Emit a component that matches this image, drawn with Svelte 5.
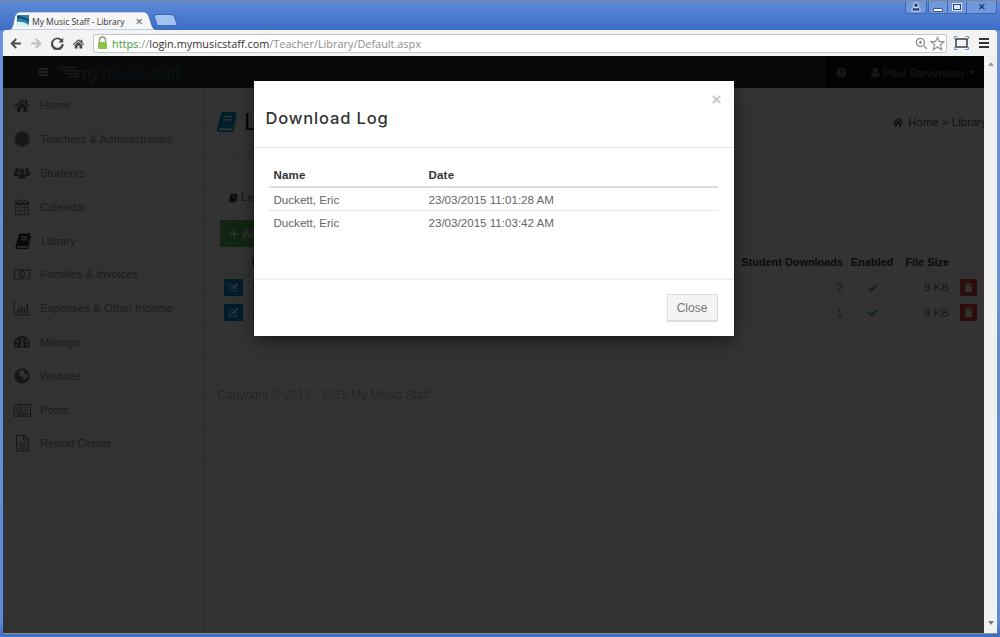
<script>
  const star = (() => {
    let d = '';
    for (let i = 0; i < 32; i++) {
      const r = i % 2 ? 11.5 : 8.5;
      const a = (i / 32) * Math.PI * 2;
      d += `${i ? 'L' : 'M'}${(12 + r * Math.cos(a)).toFixed(2)} ${(12 + r * Math.sin(a)).toFixed(2)}`;
    }
    return d + 'z';
  })();

  const icons = {
    home: 'M12 4 1.5 13.2 3 14.8 12 7l9 7.8 1.5-1.6L19 10.2V5h-3v2.6zM5 14.8V21h5.2v-5h3.6v5H19v-6.2L12 8.8z',
    star,
    users:
      'M5.5 5a2.6 2.6 0 1 0 .01 0zM18.5 5a2.6 2.6 0 1 0 .01 0zM12 6a3.3 3.3 0 1 0 .01 0zM1 11.5c0-1 1-1.6 2-1.6h4c.5 0 1 .2 1.300.5-1 .8-1.800 2-1.800 3.600v2H3c-1.200 0-2-.7-2-1.800zM23 11.500c0-1-1-1.600-2-1.600h-4c-.5 0-1 .2-1.300.5 1 .8 1.800 2 1.800 3.600v2H21c1.200 0 2-.7 2-1.800zM9.500 12.500h5c1.500 0 2.500 1 2.500 2.500v3c0 1.500-1 2-2.500 2h-5C8 20 7 19.500 7 18v-3c0-1.500 1-2.500 2.500-2.500z',
    calendar:
      'M3 4.500h18V23H3zM4.300 9v12.700h15.400V9zM6.500 2h2.500v5H6.500zM11 2h2v5h-2zM15 2h2.500v5H15zM4.300 12.500h15.400v.8H4.300zM4.300 16.500h15.400v.8H4.300zM8 9h.8v12.700H8zM11.600 9h.8v12.700h-.8zM15.200 9h.8v12.700h-.8z',
    book: 'M7 2h15l-3.800 17H5.500c-1 0-1.300.5-1.300 1s.4 1 1.300 1H18l4-16.500 1 .8L19 23H4.500C2.500 23 1.500 21.500 2 19.500zM9.500 6l-.3 1.500h8.500l.3-1.500zM8.800 9.500l-.3 1.500H17l.3-1.500z',
    money:
      'M1 6h22v13H1zM2.500 7.500v10h19v-10zM12 8a4.500 4.500 0 1 0 .01 0zM12 9.500a3 3 0 1 1-.01 0zM11.300 10.500h1.400v4.500h-1.400z',
    chart: 'M1 3h1.300v17.700H23V22H1zM6 13h2.200v6H6zM10 10h2.200v9H10zM14 12h2.200v7H14zM18 6h2.200v13H18z',
    gauge:
      'M12 4C5.500 4 1 9 1 14.500c0 2 .5 3.500 1.500 5h19c1-1.500 1.500-3 1.500-5C23 9 18.500 4 12 4zM6 9a1.600 1.600 0 1 1-.01 0zM12 6.500a1.600 1.600 0 1 1-.01 0zM18 9a1.600 1.600 0 1 1-.01 0zM4.500 13.500a1.600 1.600 0 1 1-.01 0zM19.500 13.500a1.600 1.600 0 1 1-.01 0zM11 11h2l.5 5a1.800 1.800 0 1 1-3 0z',
    globe:
      'M12 2a10 10 0 1 0 .01 0zM9 5c2-1 5-1 7 0l-2 3 2 2 3-1 1 3-3 4-3 1-1-4-4-1-1-4z',
    news: 'M1 4h23v17H1zM2.300 5.300v14.400h20.400V5.300zM5 7h7v6.500H5zM6.300 8.300v3.900h4.400V8.300zM14 7.500h6.500v1.300H14zM14 11h6.500v1.300H14zM5 15h15.500v1.300H5zM5 17.500h15.500v1H5z',
    file: 'M4 1h11l6 6v16H4zM5.500 2.500v19h14V9h-6V2.500zM15 3.200V7.500h4.300zM8 12h9v1.200H8zM8 15h9v1.200H8zM8 18h9v1.200H8z',
    edit: 'M3 5h10l-2 2H5v12h12v-6l2-2v10H3zM19 2l3 3-10 10H9v-3z',
    trash: 'M9 2h6v2h5v2H4V4h5zM5 7.500h14V22H5z',
    check: 'M2 13l3-3 5 5L20 5l3 3L10 21z',
    plus: 'M9.500 2h5v7.500H22v5h-7.500V22h-5v-7.500H2v-5h7.500z',
    help: 'M12 1.500a10.500 10.500 0 1 0 .01 0zM11 16h2.500v3H11zM8 8.500c.5-2 2-3 4-3 2.500 0 4.300 1.400 4.300 3.500 0 2.700-3 2.800-3 5h-2.500c0-3.200 2.800-3.300 2.800-5 0-.8-.6-1.300-1.500-1.300-1 0-1.500.5-1.800 1.500z',
    user: 'M12 2a5.500 5.500 0 1 0 .01 0zM6 12.500c1.500 1.200 3.500 1.800 6 1.800s4.500-.6 6-1.800c2 .5 3.500 3 3.500 6.500 0 2-1 3-3 3h-13c-2 0-3-1-3-3 0-3.500 1.500-6 3.500-6.500z'
  };

  const nav = [
    ['home', 'Home'],
    ['star', 'Teachers & Administrators'],
    ['users', 'Students'],
    ['calendar', 'Calendar'],
    ['book', 'Library'],
    ['money', 'Families & Invoices'],
    ['chart', 'Expenses & Other Income'],
    ['gauge', 'Mileage'],
    ['globe', 'Website'],
    ['news', 'Posts'],
    ['file', 'Report Center']
  ];

  const files = [
    { name: 'Lesson notes', downloads: 2 },
    { name: 'Lesson plan', downloads: 1 }
  ];

  const log = [
    { name: 'Duckett, Eric', date: '23/03/2015 11:01:28 AM' },
    { name: 'Duckett, Eric', date: '23/03/2015 11:03:42 AM' }
  ];
</script>

{#snippet icon(name, size)}
  <svg class="icon" width={size} height={size} viewBox="0 0 24 24" aria-hidden="true">
    <path d={icons[name]} fill="currentColor" fill-rule="evenodd" />
  </svg>
{/snippet}

<div class="window">
  <div class="tabstrip">
    <svg class="tabshape" width="150" height="18" viewBox="0 0 150 18" aria-hidden="true">
      <path d="M0 18C5 18 6 15 7 8 8 2 10 0 14 0H136c4 0 5 2 7 8 2 7 3 10 7 10z" fill="#f6f6f6" stroke="#3f6bb5" stroke-width=".6" />
    </svg>
    <div class="tab">
      <svg class="favicon" width="12" height="12" viewBox="0 0 12 12" aria-hidden="true">
        <rect width="12" height="12" fill="#2d7fa8" />
        <path d="M0 7c4-1 8 0 12 3v2H0z" fill="#d8eef5" />
        <path d="M0 3c4 0 8 1 12 4V5C8 2 4 1 0 1z" fill="#0c4a68" />
      </svg>
      <span class="tabtitle">My Music Staff - Library</span>
      <span class="tabclose">×</span>
    </div>
    <div class="newtab"></div>
    <div class="winbtns">
      <div class="wingroup single">
        <svg width="10" height="10" viewBox="0 0 24 24" aria-hidden="true"><path d={icons.user} fill="#23407a" stroke="#fff" stroke-width="2" /></svg>
      </div>
      <div class="wingroup">
        <div class="winbtn"><span class="min"></span></div>
        <div class="winbtn"><span class="max"></span></div>
        <div class="winbtn wide">✕</div>
      </div>
    </div>
  </div>

  <div class="toolbar">
    <svg class="tool" width="13" height="13" viewBox="0 0 24 24" aria-hidden="true"><path d="M22 10H9.500l5-5L12 2.500 2.500 12l9.500 9.500 2.500-2.500-5-5H22z" fill="#4a4a4a" /></svg>
    <svg class="tool" width="13" height="13" viewBox="0 0 24 24" aria-hidden="true"><path d="M2 10h12.500l-5-5L12 2.500l9.500 9.500-9.500 9.500L9.500 19l5-5H2z" fill="#bdbdbd" /></svg>
    <svg class="tool" width="13" height="13" viewBox="0 0 24 24" aria-hidden="true"><path d="M19.500 13a7.800 7.800 0 1 1-2.300-6.500L14 10h8.500V1.500l-2.800 2.800A11.800 11.800 0 1 0 23.500 13z" fill="#4a4a4a" /></svg>
    <svg class="tool" width="13" height="13" viewBox="0 0 24 24" aria-hidden="true"><path d={icons.home} fill="#4a4a4a" /></svg>
    <div class="omnibox">
      <svg width="11" height="14" viewBox="0 0 11 14" aria-hidden="true">
        <path d="M2.500 6V4a3 3 0 0 1 6 0v2" fill="none" stroke="#8c9a7c" stroke-width="1.400" />
        <rect x="1" y="6" width="9" height="7" rx="1" fill="#8ec44e" />
      </svg>
      <span class="url"><span class="green">https</span><span class="grey">://</span><span class="domain">login.mymusicstaff.com</span><span class="grey">/Teacher/Library/Default.aspx</span></span>
      <svg class="omni-right" width="13" height="13" viewBox="0 0 24 24" aria-hidden="true">
        <circle cx="10" cy="10" r="7.500" fill="none" stroke="#8f8f8f" stroke-width="2.400" />
        <path d="M15.500 15.500 22 22M7 10h6M10 7v6" stroke="#8f8f8f" stroke-width="2.400" />
      </svg>
      <svg width="15" height="15" viewBox="0 0 24 24" aria-hidden="true">
        <path d="M12 2l3 7h7.500l-6 5 2.200 8L12 17.500 5.300 22l2.200-8-6-5H9z" fill="#fff" stroke="#8f8f8f" stroke-width="1.800" />
      </svg>
    </div>
    <svg class="fullscreen" width="15" height="14" viewBox="0 0 15 14" aria-hidden="true">
      <rect x="2" y="3" width="11" height="8" fill="none" stroke="#333" stroke-width="1.400" />
      <path d="M.5 3V.5h3M11.500.5h3V3M14.500 11v2.500h-3M3.500 13.500h-3V11" fill="none" stroke="#5b93d6" stroke-width="1" />
    </svg>
    <div class="burger"><span></span><span></span><span></span></div>
  </div>

  <div class="viewport">
    <div class="page">
      <header class="topnav">
        <span class="hamburger"><span></span><span></span><span></span></span>
        <svg class="swoosh" width="18" height="13" viewBox="0 0 18 13" aria-hidden="true">
          <path d="M0 1h18v1.300H0zM3 4h15v1.300H3zM6 7h12v1.300H6zM9 10h9v1.300H9z" fill="#8a8a8a" />
        </svg>
        <span class="logo"><span class="my">my</span> <span class="ms">music staff</span></span>
        <div class="usernav">
          <span class="helpicon">{@render icon('help', 11)}</span>
          <span class="username">{@render icon('user', 11)} Paul Stevenson <span class="caret"></span></span>
        </div>
      </header>

      <div class="body">
        <aside class="sidebar">
          {#each nav as [ic, label]}
            <div class="navitem" class:active={label === 'Library'}>
              <span class="navicon">{@render icon(ic, 18)}</span>
              <span>{label}</span>
            </div>
          {/each}
        </aside>

        <main class="main">
          <div class="pagehead">
            <span class="headicon">{@render icon('book', 23)}</span>
            <h1>Library</h1>
            <div class="crumbs">{@render icon('home', 12)} <span>Home &gt; Library</span></div>
          </div>

          <div class="content">
            <div class="tabs">{@render icon('book', 10)} <span>Lesson Files</span></div>
            <div class="card">
              <div class="addbtn">{@render icon('plus', 10)} Add</div>
              <div class="thead row">
                <span></span>
                <span>Name</span>
                <span class="num">Student Downloads</span>
                <span class="center">Enabled</span>
                <span class="num">File Size</span>
                <span></span>
              </div>
              {#each files as f}
                <div class="row">
                  <span class="editbtn">{@render icon('edit', 11)}</span>
                  <span>{f.name}</span>
                  <span class="num">{f.downloads}</span>
                  <span class="center check">{@render icon('check', 11)}</span>
                  <span class="num">9 KB</span>
                  <span class="delbtn">{@render icon('trash', 11)}</span>
                </div>
              {/each}
            </div>
            <p class="copyright">Copyright © 2013 - 2015 My Music Staff</p>
          </div>
        </main>
      </div>

      <div class="overlay">
        <div class="modal">
          <div class="modalhead">
            <span class="close">×</span>
            <h2>Download Log</h2>
          </div>
          <div class="modalbody">
            <table>
              <thead>
                <tr><th class="colname">Name</th><th>Date</th></tr>
              </thead>
              <tbody>
                {#each log as l}
                  <tr><td>{l.name}</td><td>{l.date}</td></tr>
                {/each}
              </tbody>
            </table>
          </div>
          <div class="modalfoot"><button>Close</button></div>
        </div>
      </div>
    </div>

    <div class="scrollbar"><span class="arrow"></span><span class="arrow down"></span></div>
  </div>
</div>

<style>
  :global(body) {
    margin: 0;
    overflow: hidden;
  }
  .window {
    width: 1000px;
    height: 637px;
    display: flex;
    flex-direction: column;
    box-sizing: border-box;
    padding: 0 3px 3px;
    background: linear-gradient(#5f8bd8 0, #3c6cc4 29px, #6a93da 30px, #5f8ad6 620px, #3f6fc4 634px);
    border-top: 1px solid #7d8797;
    font-family: 'Liberation Sans', Arial, sans-serif;
    font-size: 12px;
    overflow: hidden;
  }
  .tabstrip {
    height: 29px;
    display: flex;
    align-items: flex-end;
    position: relative;
    flex: none;
  }
  .tabshape {
    position: absolute;
    left: 4px;
    bottom: 0;
  }
  .tab {
    position: relative;
    width: 126px;
    height: 18px;
    margin-left: 14px;
    display: flex;
    align-items: center;
    gap: 3px;
    font-family: 'Open Sans', sans-serif;
    font-size: 8.500px;
    color: #333;
  }
  .tabtitle {
    flex: 1;
    white-space: nowrap;
  }
  .tabclose {
    font-size: 13px;
    line-height: 1;
    color: #555;
  }
  .newtab {
    width: 19px;
    height: 10px;
    margin: 0 0 4px 12px;
    background: #a3c2ef;
    border: 1px solid #3f6bb5;
    border-radius: 3px 3px 0 0;
    transform: skewX(18deg);
  }
  .winbtns {
    margin-left: auto;
    align-self: flex-start;
    display: flex;
    gap: 0;
  }
  .wingroup {
    height: 12px;
    display: flex;
    border: 1px solid #3f68b4;
    border-top: 0;
    border-radius: 0 0 3px 3px;
    background: #6f98dd;
  }
  .wingroup.single {
    width: 20px;
    justify-content: center;
    align-items: center;
    margin-right: 1px;
  }
  .winbtn {
    width: 18px;
    display: flex;
    align-items: center;
    justify-content: center;
    border-right: 1px solid #3f68b4;
    color: #1c3a78;
    font-size: 9px;
    font-weight: 700;
  }
  .winbtn.wide {
    width: 29px;
    border-right: 0;
  }
  .min {
    width: 8px;
    height: 2px;
    margin-top: 5px;
    background: #fff;
    border: 1px solid #3a5a96;
    border-radius: 1px;
  }
  .max {
    width: 6px;
    height: 4px;
    background: #dfe9f9;
    border: 1px solid #23407a;
    outline: 1px solid #dfe9f9;
  }
  .toolbar {
    height: 26px;
    flex: none;
    display: flex;
    align-items: center;
    gap: 8px;
    padding: 0 0 0 6px;
    background: #f3f3f3;
    border-radius: 3px 3px 0 0;
  }
  .tool {
    flex: none;
  }
  .omnibox {
    width: 854px;
    height: 19px;
    flex: none;
    box-sizing: border-box;
    display: flex;
    align-items: center;
    gap: 2px;
    padding: 0 1px 0 3px;
    background: #fff;
    border: 1px solid #c4c4c4;
    border-radius: 2px;
  }
  .url {
    flex: 1;
    margin-left: 2px;
    font-family: 'Open Sans', sans-serif;
    font-size: 10.900px;
    white-space: nowrap;
  }
  .green {
    color: #3d9a3d;
  }
  .grey {
    color: #8d8d8d;
  }
  .domain {
    color: #333;
  }
  .fullscreen {
    flex: none;
    margin-left: -1px;
  }
  .burger {
    display: flex;
    flex-direction: column;
    gap: 2px;
    width: 10px;
    flex: none;
    margin-left: 2px;
  }
  .burger span {
    height: 2px;
    background: #333;
  }
  .viewport {
    flex: 1;
    display: flex;
    min-height: 0;
  }
  .page {
    flex: 1;
    position: relative;
    display: flex;
    flex-direction: column;
    background: #fff;
    overflow: hidden;
    min-width: 0;
    border-bottom: 1px solid #8e8e8e;
  }
  .scrollbar {
    width: 13px;
    flex: none;
    background: #f1f1f1;
    display: flex;
    flex-direction: column;
    align-items: center;
    justify-content: space-between;
    padding: 6px 0 8px;
    box-sizing: border-box;
    border-bottom: 1px solid #8e8e8e;
  }
  .arrow {
    width: 0;
    height: 0;
    border: 3px solid transparent;
    border-top: 0;
    border-bottom: 4px solid #a0a0a0;
  }
  .arrow.down {
    border-bottom: 0;
    border-top: 4px solid #777;
  }
  .topnav {
    height: 32px;
    flex: none;
    display: flex;
    align-items: center;
    background: #2f2f2f;
    color: #777;
  }
  .hamburger {
    display: flex;
    flex-direction: column;
    gap: 1.500px;
    width: 10px;
    margin: 0 11px 0 35px;
  }
  .hamburger span {
    height: 1.500px;
    background: #999;
  }
  .logo {
    margin-left: -1px;
    font-family: 'Open Sans', sans-serif;
    font-size: 17px;
    font-weight: 300;
    letter-spacing: -0.4px;
    white-space: nowrap;
  }
  .my {
    color: #8a8a8a;
  }
  .ms {
    color: #1e6f9a;
  }
  .usernav {
    margin-left: auto;
    width: 159px;
    height: 100%;
    display: flex;
    align-items: center;
    background: #111;
    color: #777;
    box-sizing: border-box;
    padding: 1px 0 0 11px;
  }
  .helpicon {
    display: flex;
    margin-right: 23px;
  }
  .username {
    display: flex;
    align-items: center;
    gap: 2px;
    font-size: 11.500px;
    white-space: nowrap;
  }
  .caret {
    width: 0;
    height: 0;
    margin-left: 3px;
    border: 3px solid transparent;
    border-bottom: 0;
    border-top: 3px solid #777;
  }
  .body {
    flex: 1;
    display: flex;
    min-height: 0;
  }
  .sidebar {
    width: 201px;
    flex: none;
    box-sizing: content-box;
    padding-top: 1px;
    background: #fafafa;
    border-right: 1px solid #ddd;
    color: #8a8a8a;
    font-size: 11.400px;
  }
  .navitem {
    height: 33.800px;
    box-sizing: border-box;
    display: flex;
    align-items: center;
    gap: 9px;
    padding-left: 10px;
    border-bottom: 1px solid #f1f1f1;
  }
  .navitem.active {
    background: #fff;
    padding-left: 11px;
  }
  .navicon {
    width: 18px;
    display: flex;
    justify-content: center;
    color: #707070;
  }
  .navitem.active .navicon {
    color: #333;
  }
  .icon {
    display: block;
    flex: none;
  }
  .main {
    flex: 1;
    min-width: 0;
  }
  .pagehead {
    height: 68px;
    box-sizing: border-box;
    display: flex;
    align-items: center;
    padding-left: 10px;
    border-bottom: 1px solid #fff;
    background: #fff;
    box-shadow: 0 1px 0 #e8e8e8;
  }
  .headicon {
    color: #0093d6;
    margin-right: 6px;
  }
  h1 {
    margin: 0;
    font-size: 24px;
    font-weight: 400;
    color: #111;
  }
  .crumbs {
    margin-left: auto;
    display: flex;
    align-items: center;
    gap: 4px;
    color: #555;
    font-size: 11.500px;
    white-space: nowrap;
    overflow: hidden;
    width: 92px;
    flex: none;
  }
  .content {
    padding: 32px 0 0 12px;
  }
  .tabs {
    height: 24px;
    display: flex;
    align-items: flex-start;
    gap: 3px;
    margin-left: 11px;
    padding-top: 3px;
    box-sizing: border-box;
    color: #777;
    font-size: 11.500px;
  }
  .tabs .icon {
    margin-top: 2px;
    color: #222;
  }
  .card {
    height: 143px;
    box-sizing: border-box;
    border: 1px solid #eee;
    border-right: 0;
    border-radius: 3px 0 0 3px;
    padding: 7px 7px 0 2px;
  }
  .addbtn {
    width: 60px;
    height: 27px;
    display: flex;
    align-items: center;
    gap: 3px;
    padding-left: 9px;
    box-sizing: border-box;
    background: #5cb85c;
    color: #eee;
    font-size: 12px;
    font-weight: 700;
  }
  .row {
    display: grid;
    grid-template-columns: 19px 1fr 110px 50px 56px 28px;
    align-items: center;
    height: 24.500px;
    padding-left: 4px;
    color: #777;
    font-size: 11.500px;
    border-top: 1px solid #ddd;
  }
  .thead {
    margin-top: 3px;
    height: 24px;
    border-top: 0;
    color: #333;
    font-weight: 700;
    font-size: 10.900px;
  }
  .row > span:nth-child(2) {
    padding-left: 9px;
    white-space: nowrap;
  }
  .num {
    text-align: right;
    white-space: nowrap;
  }
  .center {
    display: flex;
    justify-content: center;
    white-space: nowrap;
    padding-left: 8px;
  }
  .check {
    color: #5cb85c;
  }
  .editbtn,
  .delbtn {
    width: 19px;
    height: 17px;
    display: flex;
    align-items: center;
    justify-content: center;
    color: #fff;
    background: #0093d6;
  }
  .delbtn {
    width: 17px;
    margin-left: 11px;
    background: #d9403a;
  }
  .copyright {
    margin: 33px 0 0;
    color: #b5b5b5;
    font-size: 12px;
  }
  .overlay {
    position: absolute;
    inset: 0;
    background: rgba(0, 0, 0, 0.8);
    display: flex;
    justify-content: center;
    align-items: flex-start;
  }
  .modal {
    width: 480px;
    height: 255px;
    margin-top: 25px;
    display: flex;
    flex-direction: column;
    background: #fff;
    box-shadow: 0 5px 15px rgba(0, 0, 0, 0.5);
    box-sizing: border-box;
  }
  .modalhead {
    height: 67px;
    flex: none;
    position: relative;
    box-sizing: border-box;
    padding: 27px 12px 0;
    border-bottom: 1px solid #e8e8e8;
  }
  .close {
    position: absolute;
    right: 12px;
    top: 10px;
    font-size: 17px;
    font-weight: 700;
    line-height: 1;
    color: #c8c8c8;
  }
  h2 {
    margin: 0;
    font-family: Inter, sans-serif;
    font-size: 16.500px;
    line-height: 20px;
    font-weight: 500;
    letter-spacing: 0.85px;
    color: #333;
  }
  .modalbody {
    flex: 1;
    padding: 15px 16px 0 15px;
  }
  table {
    width: 100%;
    border-collapse: collapse;
    color: #666;
    font-size: 11.600px;
  }
  th {
    text-align: left;
    height: 23px;
    padding: 0 5px;
    font-size: 11.500px;
    letter-spacing: 0.2px;
    color: #333;
    border-bottom: 2px solid #ddd;
  }
  .colname {
    width: 145px;
  }
  td {
    height: 22px;
    padding: 0 5px;
    border-bottom: 1px solid #e8e8e8;
  }
  tr:last-child td {
    border-bottom: 0;
  }
  .modalfoot {
    height: 58px;
    flex: none;
    box-sizing: border-box;
    display: flex;
    justify-content: flex-end;
    align-items: flex-start;
    padding: 14px 16px 0;
    border-top: 2px solid #f0f0f0;
  }
  button {
    width: 51px;
    height: 28px;
    padding: 0;
    font: 12px 'Liberation Sans', Arial, sans-serif;
    color: #777;
    background: #f4f4f4;
    border: 1px solid #ddd;
    border-bottom-width: 2px;
    border-radius: 1px;
  }
</style>
